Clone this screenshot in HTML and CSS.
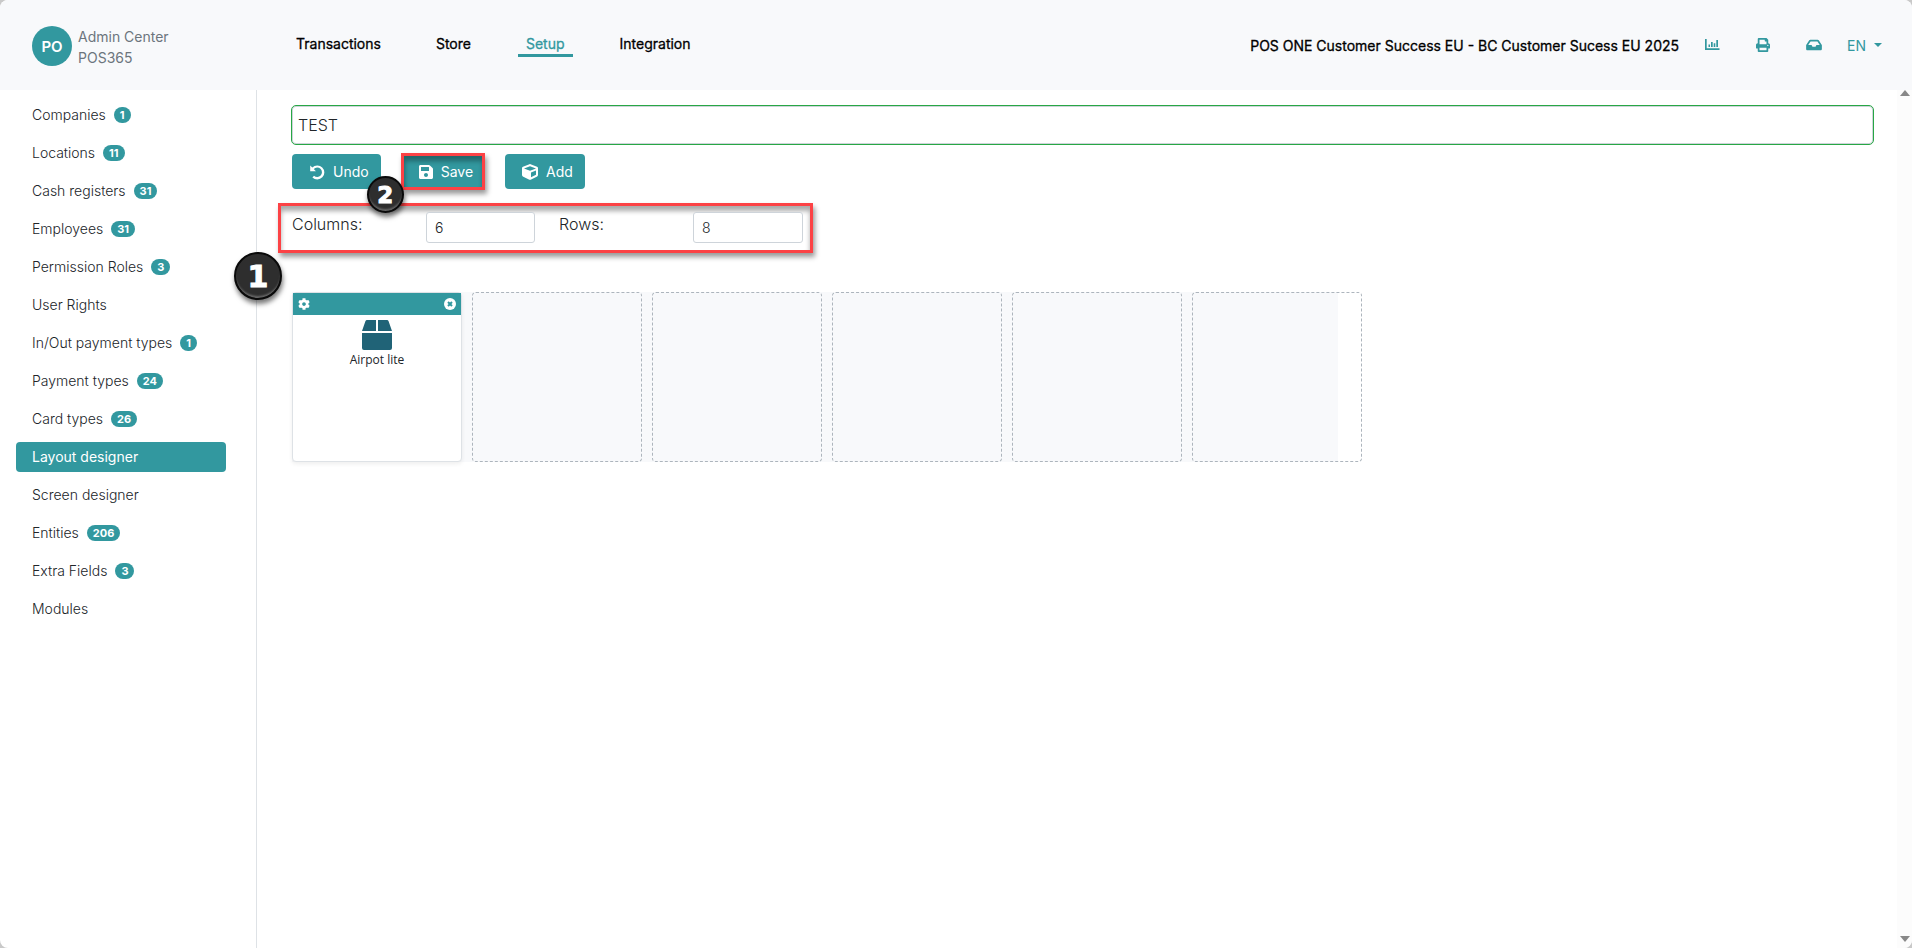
FILE: index.html
```html
<!DOCTYPE html>
<html lang="en">
<head>
<meta charset="utf-8">
<title>Layout designer - Admin Center POS365</title>
<link rel="stylesheet" href="styles.css">
</head>
<body>
<div class="window">
  <header class="topbar">
    <a class="brand" href="#">
      <span class="avatar">PO</span>
      <span class="brand-text">Admin Center<br>POS365</span>
    </a>
    <nav class="main-nav">
      <a href="#">Transactions</a>
      <a href="#">Store</a>
      <a href="#" class="current">Setup</a>
      <a href="#">Integration</a>
    </nav>
    <div class="tools">
      <span class="company">POS ONE Customer Success EU - BC Customer Sucess EU 2025</span>
      <button class="tool" aria-label="Reports"><svg viewBox="0 0 16 16" width="16" height="16"><path d="M1 2v11h14.500v-1.800H2.700V2zM4.500 7.500h1.500V10H4.500zM7 5h1.700v5H7zM9.700 6.200h1.600V10H9.700zM12.300 3H14v7h-1.700z"/></svg></button>
      <button class="tool" aria-label="Print"><svg viewBox="0 0 512 512" width="14" height="14"><path d="M448 192V77.250c0-8.490-3.370-16.620-9.370-22.630L393.370 9.370c-6-6-14.140-9.370-22.630-9.370H96C78.330 0 64 14.330 64 32v160c-35.350 0-64 28.650-64 64v112c0 8.840 7.160 16 16 16h48v96c0 17.670 14.330 32 32 32h320c17.670 0 32-14.330 32-32v-96h48c8.840 0 16-7.160 16-16V256c0-35.350-28.650-64-64-64zm-64 256H128v-96h256v96zm0-224H128V64h192v48c0 8.840 7.160 16 16 16h48v96zm48 72c-13.250 0-24-10.750-24-24 0-13.260 10.750-24 24-24s24 10.740 24 24c0 13.250-10.750 24-24 24z"/></svg></button>
      <button class="tool" aria-label="Inbox"><svg viewBox="0 0 576 512" width="16" height="14"><path d="M567.938 243.908L462.250 85.374A48.003 48.003 0 0 0 422.311 64H153.689a48 48 0 0 0-39.938 21.374L8.062 243.908A47.994 47.994 0 0 0 0 270.533V400c0 26.510 21.490 48 48 48h480c26.510 0 48-21.490 48-48V270.533a47.994 47.994 0 0 0-8.062-26.625zM162.252 128h251.497l85.333 128H376l-32 64H232l-32-64H76.918l85.334-128z"/></svg></button>
      <button class="lang">EN <span class="caret"></span></button>
    </div>
  </header>
  <div class="body">
    <aside class="sidebar">
      <nav class="side-nav">
        <a href="#">Companies <span class="badge">1</span></a>
        <a href="#">Locations <span class="badge">11</span></a>
        <a href="#">Cash registers <span class="badge">31</span></a>
        <a href="#">Employees <span class="badge">31</span></a>
        <a href="#">Permission Roles <span class="badge">3</span></a>
        <a href="#">User Rights</a>
        <a href="#">In/Out payment types <span class="badge">1</span></a>
        <a href="#">Payment types <span class="badge">24</span></a>
        <a href="#">Card types <span class="badge">26</span></a>
        <a href="#" class="active">Layout designer</a>
        <a href="#">Screen designer</a>
        <a href="#">Entities <span class="badge">206</span></a>
        <a href="#">Extra Fields <span class="badge">3</span></a>
        <a href="#">Modules</a>
      </nav>
    </aside>
    <main class="content">
      <input class="name-field" type="text" value="TEST" aria-label="Layout name">
      <div class="actions">
        <button class="btn"><svg viewBox="0 0 16 16" width="16" height="16"><path d="M1.200 1.500v5.700h5.700L4.800 5.100A4.700 4.700 0 1 1 5 11.700l-1.600 1.700A7 7 0 1 0 3.300 3.600z"/></svg>Undo</button>
        <span class="marked save-mark"><button class="btn"><svg viewBox="0 0 448 512" width="14" height="16"><path d="M433.941 129.941l-83.882-83.882A48 48 0 0 0 316.118 32H48C21.490 32 0 53.490 0 80v352c0 26.510 21.490 48 48 48h352c26.510 0 48-21.490 48-48V163.882a48 48 0 0 0-14.059-33.941zM224 416c-35.346 0-64-28.654-64-64 0-35.346 28.654-64 64-64s64 28.654 64 64c0 35.346-28.654 64-64 64zm96-304.520V212c0 6.627-5.373 12-12 12H76c-6.627 0-12-5.373-12-12V108c0-6.627 5.373-12 12-12h228.520c3.183 0 6.235 1.264 8.485 3.515l3.480 3.480A11.996 11.996 0 0 1 320 111.480z"/></svg>Save</button><span class="step step-two">2</span></span>
        <button class="btn"><svg viewBox="0 0 512 512" width="16" height="16"><path d="M239.100 6.300l-208 78c-18.700 7-31.100 25-31.100 45v225.100c0 18.200 10.300 34.800 26.500 42.900l208 104c13.500 6.800 29.400 6.800 42.900 0l208-104c16.300-8.100 26.500-24.800 26.500-42.900V129.300c0-20-12.400-37.900-31.100-44.900l-208-78C262 2.200 250 2.200 239.100 6.300zM256 68.400l192 72v1.100l-192 78-192-78v-1.100l192-72zm32 356V275.500l160-65v133.900l-160 80z"/></svg>Add</button>
      </div>
      <div class="marked size-mark">
        <label for="cols">Columns:</label>
        <input id="cols" type="text" value="6">
        <label for="rows">Rows:</label>
        <input id="rows" type="text" value="8">
        <span class="step step-one">1</span>
      </div>
      <div class="board">
        <div class="tile">
          <div class="tile-bar">
            <button aria-label="Tile settings"><svg viewBox="0 0 512 512" width="12" height="12"><path d="M487.400 315.700l-42.600-24.600c4.300-23.200 4.300-47 0-70.200l42.600-24.600c4.900-2.800 7.100-8.600 5.500-14-11.100-35.600-30-67.800-54.700-94.600-3.800-4.100-10-5.100-14.800-2.300L380.800 110c-17.900-15.400-38.500-27.300-60.800-35.100V25.800c0-5.600-3.900-10.500-9.400-11.700-36.700-8.200-74.300-7.800-109.200 0-5.500 1.200-9.400 6.100-9.400 11.700V75c-22.200 7.900-42.800 19.800-60.800 35.100L88.700 85.500c-4.900-2.800-11-1.900-14.800 2.300-24.700 26.700-43.600 58.900-54.700 94.600-1.700 5.400.6 11.200 5.500 14L67.300 221c-4.300 23.200-4.300 47 0 70.200l-42.600 24.600c-4.900 2.800-7.100 8.600-5.500 14 11.100 35.600 30 67.800 54.700 94.600 3.800 4.100 10 5.100 14.800 2.300l42.600-24.600c17.900 15.400 38.500 27.300 60.800 35.100v49.200c0 5.600 3.900 10.500 9.400 11.700 36.700 8.200 74.300 7.800 109.200 0 5.500-1.200 9.400-6.100 9.400-11.700v-49.200c22.200-7.900 42.800-19.800 60.800-35.100l42.600 24.600c4.900 2.800 11 1.900 14.800-2.300 24.700-26.700 43.600-58.900 54.700-94.600 1.500-5.500-.7-11.300-5.600-14.100zM256 336c-44.100 0-80-35.900-80-80s35.900-80 80-80 80 35.900 80 80-35.900 80-80 80z"/></svg></button>
            <button aria-label="Remove tile"><svg viewBox="0 0 12 12" width="12" height="12"><circle cx="6" cy="6" r="6"/><path class="cross" d="M4 4l4 4M8 4L4 8"/></svg></button>
          </div>
          <svg class="box" viewBox="0 0 30 30" width="30" height="30"><path d="M5 0h9v11H0L3.400 1.200Q3.900 0 5 0zM16 0h9q1.100 0 1.600 1.200L30 11H16zM0 13h30v15q0 2-2 2H2q-2 0-2-2z"/></svg>
          <span class="tile-name">Airpot lite</span>
        </div>
        <div class="slot"></div>
        <div class="slot"></div>
        <div class="slot"></div>
        <div class="slot"></div>
        <div class="slot"></div>
      </div>
    </main>
    <div class="scrollbar"><span class="up"></span><span class="down"></span></div>
  </div>
</div>
</body>
</html>
```
FILE: styles.css
```css
* { box-sizing: border-box; }
body {
  margin: 0;
  background: #c9c9c9;
  color: #212529;
  font-family: Inter, "Liberation Sans", sans-serif;
  font-size: 14px;
  font-weight: 300;
}
a { color: inherit; text-decoration: none; }
button, input { font: inherit; color: inherit; margin: 0; }
button { border: 0; background: none; padding: 0; }
svg { display: block; fill: currentColor; flex: none; }

.window {
  display: flex;
  flex-direction: column;
  min-height: 100vh;
  background: #fff;
  border-radius: 8px;
  overflow: hidden;
}

.topbar {
  display: flex;
  align-items: center;
  height: 90px;
  padding: 0 30px 0 32px;
  background: #f8f9fb;
}
.brand { display: flex; align-items: center; gap: 6px; width: 256px; padding-top: 2px; }
.avatar {
  display: flex;
  align-items: center;
  justify-content: center;
  width: 40px;
  height: 40px;
  border-radius: 50%;
  background: #32989f;
  color: #fff;
  font-size: 15px;
  font-weight: 600;
}
.brand-text { color: #6c757d; font-weight: 400; line-height: 21px; padding-top: 2px; }
.main-nav { display: flex; gap: 39px; color: #000; font-weight: 400; -webkit-text-stroke: 0.3px; }
.main-nav a { padding: 0 8px; line-height: 21px; border-bottom: 3px solid transparent; }
.main-nav .current { color: #32989f; border-color: #32989f; }
.tools { display: flex; align-items: center; margin-left: auto; color: #32989f; }
.company { color: #000; font-weight: 400; -webkit-text-stroke: 0.3px; margin-right: 25px; }
.tool { display: flex; margin-right: 36px; }
.lang { display: flex; align-items: center; gap: 8px; font-weight: 400; }
.tool + .lang { margin-left: -11px; }
.caret { border: 4px solid transparent; border-top-color: currentColor; border-bottom: 0; }

.body { display: flex; flex: 1; }
.sidebar { width: 257px; border-right: 1px solid #dee2e6; }
.side-nav { display: flex; flex-direction: column; gap: 8px; padding: 10px 30px 10px 16px; }
.side-nav a { display: flex; align-items: center; gap: 8px; height: 30px; padding: 0 16px 1px; border-radius: 4px; }
.side-nav .active { background: #32989f; color: #fff; font-weight: 400; }
.badge {
  padding: 0 6px;
  border-radius: 8px;
  background: #32989f;
  color: #fff;
  font-size: 11px;
  font-weight: 700;
  line-height: 16px;
}

.content { flex: 1; min-width: 0; padding: 15px 23px 0 34px; }
.name-field {
  display: block;
  width: 100%;
  height: 40px;
  padding: 0 6px;
  border: 1px solid #28a745;
  border-radius: 5px;
  box-shadow: inset 0 0 0 1px #ced4da;
  font-size: 16px;
}
.actions { display: flex; align-items: center; gap: 20px; margin-top: 8px; padding-left: 1px; }
.btn {
  display: flex;
  align-items: center;
  gap: 8px;
  height: 35px;
  padding: 0 12px 0 17px;
  border-radius: 4px;
  background: #32989f;
  color: #fff;
  font-weight: 400;
}
.marked { position: relative; border: 3px solid #fc4245; box-shadow: 2px 4px 5px #0006, inset 0 5px 5px #0005; }
.save-mark .btn { height: 31px; padding: 0 9px 0 15px; border-radius: 0; box-shadow: inset 1px 5px 5px #0005; }
.size-mark {
  display: grid;
  grid-template-columns: 134px 109px 158px 110px;
  width: 535px;
  height: 50px;
  margin: 13px 0 0 -13px;
  padding: 6px 7px 0 11px;
}
.size-mark label { font-size: 16px; line-height: 24px; }
.size-mark input + label { padding-left: 24px; }
.size-mark input {
  height: 31px;
  min-width: 0;
  padding: 0 8px;
  border: 1px solid #ced4da;
  border-radius: 3px;
  background: #fff;
}
.step {
  position: absolute;
  display: flex;
  align-items: center;
  justify-content: center;
  border: 2px solid #0a0a0a;
  border-radius: 50%;
  background: #2e2e2e;
  box-shadow: 1px 4px 5px #0008, inset 0 -3px 2px -1px #666;
  color: #fff;
  font-family: "DejaVu Sans", sans-serif;
  font-weight: 700;
  -webkit-text-stroke: 1px;
}
.step-one { left: -47px; top: 46px; width: 48px; height: 48px; font-size: 30px; }
.step-two { left: -37px; top: 20px; width: 37px; height: 37px; font-size: 23px; z-index: 1; }

.board {
  display: flex;
  gap: 10px;
  width: 1046px;
  margin: 39px 0 0 1px;
  background: #f8f9fb;
}
.tile, .slot { flex: none; width: 170px; height: 170px; border-radius: 4px; }
.slot { border: 1px dashed #adb5bd; }
.tile {
  display: flex;
  flex-direction: column;
  align-items: center;
  border: 1px solid #dee2e6;
  background: #fff;
  box-shadow: 0 2px 4px #0001;
}
.tile-bar {
  display: flex;
  align-items: center;
  justify-content: space-between;
  align-self: stretch;
  height: 22px;
  padding: 0 5px;
  background: #32989f;
  color: #fff;
}
.cross { stroke: #32989f; stroke-width: 2; }
.box { margin-top: 5px; color: #206377; }
.tile-name { font-family: "Open Sans", "Noto Sans", sans-serif; font-size: 12px; font-weight: 400; line-height: 20px; }

.scrollbar {
  display: flex;
  flex-direction: column;
  justify-content: space-between;
  align-items: center;
  width: 15px;
  padding-bottom: 6px;
  background: #fcfcfc;
}
.up, .down { border: 5px solid transparent; }
.up { border-top: 0; border-bottom: 6px solid #888; }
.down { border-bottom: 0; border-top: 6px solid #888; }
```
